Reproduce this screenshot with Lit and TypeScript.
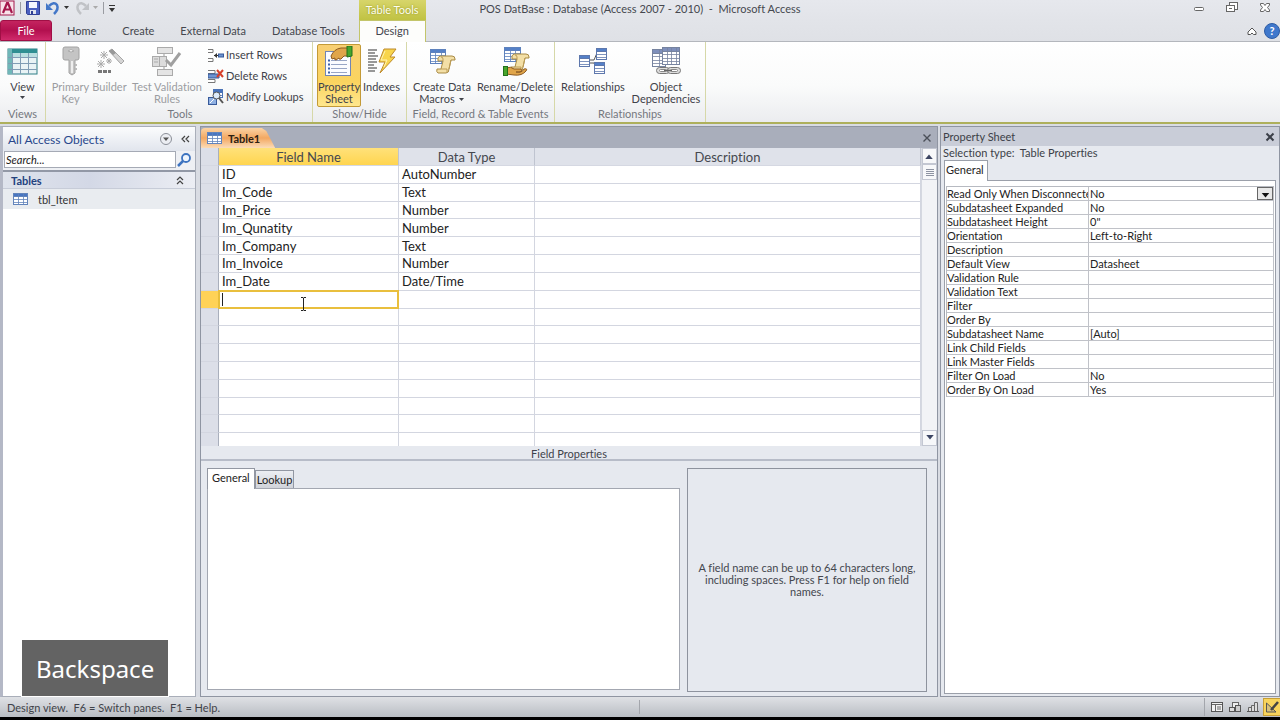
import { LitElement, html, svg, css, nothing } from "lit";
import { customElement } from "lit/decorators.js";
import { classMap } from "lit/directives/class-map.js";

const grid = (x: number, y: number, w: number, h: number, cols: number, rows: number, head: string, line: string) => {
  const parts = [svg`<rect x=${x + 0.5} y=${y + 0.5} width=${w - 1} height=${h - 1} fill="#fff" stroke=${line}/>`,
    svg`<rect x=${x + 0.5} y=${y + 0.5} width=${w - 1} height=${Math.round(h / (rows + 1))} fill=${head} stroke=${line}/>`];
  for (let i = 1; i < cols; i++) parts.push(svg`<path d="M${x + 0.5 + Math.round((w * i) / cols)} ${y}v${h}" stroke=${line} stroke-width=".8"/>`);
  for (let i = 1; i <= rows; i++) parts.push(svg`<path d="M${x} ${y + 0.5 + Math.round((h * i) / (rows + 1))}h${w}" stroke=${line} stroke-width=".8"/>`);
  return parts;
};

const scroll = (x: number, y: number) => svg`<g transform="translate(${x} ${y})">
  <path d="M3 1h12q3 0 3 3v1h-4l-2 9q0 4-3 4H1q-2-1-1-4h4l2-8H1Q0 2 3 1z" fill="#f3dfa6" stroke="#a88a45"/>
  <path d="M6 6V4q0-2-2-2M14 5l-2 9M4 14h6v3" fill="none" stroke="#bd9c55"/></g>`;

const big: Record<string, unknown> = {
  view: svg`<rect x="1" y="3" width="29" height="25" fill="#e9f3f5" stroke="#2f7f86"/>
    <rect x="1" y="3" width="29" height="4" fill="#2f8f92"/><rect x="1" y="3" width="4" height="25" fill="#6fb7b8"/>
    <rect x="5" y="7" width="25" height="4" fill="#b9dfe0"/>
    <path d="M5.500 7v21M13.500 7v21M21.500 7v21M1 11.500h29M1 17.500h29M1 23.500h29" stroke="#7f9cb4" fill="none"/>`,
  key: svg`<path d="M10 1h12q2 0 2 2v9q0 2-2 2h-2v13l-3 2-3-2V14h-4q-2 0-2-2V3q0-2 2-2z" fill="#c4c4c4" stroke="#a2a2a2"/>
    <path d="M13 5q3-3 6 0-3 2-6 0z" fill="#fff" stroke="#aaa"/><path d="M17 15v12" stroke="#eee" stroke-width="2"/><path d="M20 18h2v2h-2M20 22h2v2h-2" fill="#bbb"/>`,
  builder: svg`<path d="m15 5 3-2 12 12-3 3z" fill="#d5d5d5" stroke="#a5a5a5"/><path d="m15 5 3-2 4 4-3 2z" fill="#999"/>
    <path d="M10 5v8M6 9h8M7 6l6 6M13 6l-6 6M15 12v6M12 15h6M13 13l4 4M17 13l-4 4M7 14v8M3 18h8M4 15l6 6M10 15l-6 6" stroke="#aaa"/>
    <path d="M4 25.500h4M9 25.500h4M14 25.500h3" stroke="#777" stroke-width="3"/>`,
  validate: svg`<path d="M13 7v3M13 20v4M24 13l-5 7" stroke="#999"/><rect x="6.500" y="1.500" width="15" height="6" fill="#e4e4e4" stroke="#aaa"/>
    <rect x="1.500" y="10.500" width="14" height="10" fill="#dcdcdc" stroke="#aaa"/><path d="M8.500 11v9M3 13h4M3 16h4" stroke="#aaa"/>
    <rect x="6.500" y="23.500" width="15" height="6" fill="#e4e4e4" stroke="#aaa"/><path d="m15 14 5 5 9-12" fill="none" stroke="#a0a0a0" stroke-width="3"/>`,
  sheet: svg`<rect x="2.500" y="5.500" width="25" height="24" fill="#fbfcff" stroke="#7185b5"/><path d="M8 14.500h16M8 18.500h16M8 22.500h16M8 26.500h16" stroke="#98a6c6"/>
    <path d="M5 14.500h2M5 18.500h2M5 22.500h2M5 26.500h2" stroke="#3d61a8" stroke-width="2"/>
    <path d="M8 10q3-7 10-8h7v8h-4l-3 3q-2 1-2-1l-3 2q-2 0-1-2l-3 1z" fill="#e0a549" stroke="#8c5a22"/><path d="M24 0h5v10l-5 1z" fill="#47a52c" stroke="#22701a"/>`,
  indexes: svg`<path d="M2 4h9M2 7h7M2 10h10M2 13h8M2 16h9M2 19h6M2 22h9M2 25h7" stroke="#777" stroke-width="1.600"/>
    <path d="M18 3h12l-6 8h5L14 27l5-11h-6z" fill="#f8d54c" stroke="#bd8a2c"/><path d="m19 5-4 9h6l-3 7" fill="none" stroke="#fff3b5"/>`,
  create: svg`${grid(4, 3, 16, 15, 3, 4, "#5480c8", "#5e82bd")}${scroll(11, 9)}`,
  rename: svg`${grid(5, 1, 17, 15, 3, 4, "#5480c8", "#5e82bd")}${scroll(12, 7)}
    <path d="M7 22q5-2 8 1h7q2 2-1 3h-4q6 1 8-3 4-1 2 2-4 5-12 4l-8-1z" fill="#e0a549" stroke="#8c5a22"/><rect x="4.500" y="20.500" width="4" height="9" fill="#47a52c" stroke="#22701a"/>`,
  relations: svg`<path d="M12 14h5l3-7M12 17h5l3 5" stroke="#555" fill="none"/>${grid(2, 9, 11, 12, 1, 3, "#5480c8", "#5e78ad")}${grid(19, 2, 11, 12, 1, 3, "#5480c8", "#5e78ad")}${grid(17, 16, 11, 12, 1, 3, "#5480c8", "#5e78ad")}`,
  depend: svg`${grid(2, 3, 14, 18, 2, 4, "#7e8fbb", "#76839f")}${grid(12, 1, 18, 18, 4, 4, "#7e8fbb", "#76839f")}
    <rect x="6.500" y="21.500" width="13" height="6" rx="3" fill="#ddd" stroke="#777"/><rect x="17.500" y="21.500" width="13" height="6" rx="3" fill="#ddd" stroke="#777"/>
    <rect x="9.500" y="23.500" width="7" height="2" rx="1" fill="#fff" stroke="#888"/><rect x="20.500" y="23.500" width="7" height="2" rx="1" fill="#fff" stroke="#888"/><path d="M14 24.500h8" stroke="#666" stroke-width="1.500"/>`,
};

const small: Record<string, unknown> = {
  insert: svg`<path d="M0 2.500h5v3H0M0 11.500h5v3H0" fill="#fff" stroke="#777"/><path d="M6 8.500h4" stroke="#333"/><path d="m9 6-3 2.500L9 11z" fill="#333"/><rect x="10.500" y="7" width="5" height="3" fill="#6d94d0" stroke="#37599a"/>`,
  remove: svg`<path d="M0 2.500h7v3H0M0 11.500h7v3H0" fill="#fff" stroke="#777"/><path d="M0 6h11v4H0z" fill="#6d94d0" stroke="#37599a"/><path d="m9 2 6 7M15 2 9 9" stroke="#d8402a" stroke-width="2"/>`,
  lookup: svg`${grid(5, 0, 10, 9, 2, 2, "#4673c0", "#4a72b5")}<rect x=".5" y="8.500" width="8" height="7" fill="#8fb0e2" stroke="#37599a"/><path d="m2 14 4-4" stroke="#fff"/><circle cx="8.500" cy="6.500" r="3.500" fill="#dcebfb" stroke="#555"/><path d="m11 9 4 5" stroke="#555" stroke-width="2"/>`,
  datasheet: grid(0, 2, 15, 12, 3, 3, "#4876c2", "#6284bb"),
  logo: svg`<rect x="0" y="1" width="14" height="14" fill="#f8e3ea" stroke="#a5184c"/><path d="m3 13 4-10h1l4 10M4.500 9.500h6" fill="none" stroke="#a5184c" stroke-width="2.200"/>`,
  save: svg`<path d="M1.500 1.500h13v13h-12l-1-1z" fill="#4a5fc0" stroke="#303f94"/><rect x="4" y="2" width="8" height="6" fill="#f4f6ff"/><rect x="5" y="10" width="6" height="4" fill="#dfe3ee"/><rect x="6" y="11" width="2" height="3" fill="#303f94"/>`,
  undo: svg`<path d="M4 6q5-5 8-1 2 4-3 9" fill="none" stroke="#4377c8" stroke-width="2.500"/><path d="M1 3v7h7z" fill="#4377c8"/>`,
  redo: svg`<path d="M12 6Q7 1 4 5q-2 4 3 9" fill="none" stroke="#c0c2c6" stroke-width="2.500"/><path d="M15 3v7H8z" fill="#c0c2c6"/>`,
  search: svg`<circle cx="9" cy="6" r="4" fill="#eef5fd" stroke="#3d73c0" stroke-width="1.800"/><path d="m6 9-5 5" stroke="#3d73c0" stroke-width="2.500"/>`,
  up2: svg`<path d="m5 8 3-3 3 3M5 12l3-3 3 3" fill="none" stroke="#444" stroke-width="1.200"/>`,
  left2: svg`<path d="m7 5-3 3 3 3M11 5 8 8l3 3" fill="none" stroke="#444" stroke-width="1.200"/>`,
  round: svg`<circle cx="8" cy="8" r="5.500" fill="#eceef3" stroke="#8b8f98"/><path d="M5 6.500h6L8 10z" fill="#555"/>`,
  close: svg`<path d="m4.500 4.500 7 7M11.500 4.500l-7 7" stroke="#4b4f58" stroke-width="1.400"/>`,
  closeBold: svg`<path d="m4.500 4.500 7 7M11.500 4.500l-7 7" stroke="#3b3f48" stroke-width="2"/>`,
  min: svg`<rect x="3.500" y="7.500" width="9" height="3" rx="1" fill="#fff" stroke="#666"/>`,
  restore: svg`<rect x="5.500" y="2.500" width="8" height="7" fill="#fff" stroke="#666"/><rect x="2.500" y="5.500" width="8" height="6" fill="#fff" stroke="#666"/><path d="M5 8.500h3" stroke="#666"/>`,
  winClose: svg`<path d="M3.500 3.500h3L8 5.500l1.500-2h3v1.500L10.500 7.500l2 2.500v1.500h-3L8 9.500l-1.500 2h-3V10l2-2.500-2-2.500z" fill="#fff" stroke="#666"/>`,
  collapse: svg`<path d="m8 5 4 4v2.500H9.500L8 10l-1.500 1.500H4V9z" fill="#fff" stroke="#555"/>`,
  design: svg`<path d="M2.500 4v9H12z" fill="#d9c27a" stroke="#555"/><path d="M14 3 7 11" stroke="#444" stroke-width="2.500"/>`,
  sheetView: svg`<rect x="2.500" y="3.500" width="11" height="9" fill="#f2f2f2" stroke="#555"/><path d="M3 5.500h10M6.500 6v6M8 8h4M8 10h4" stroke="#666"/>`,
  pivot: svg`<rect x="5.500" y="3.500" width="6" height="6" fill="#eee" stroke="#666"/><rect x="8.500" y="6.500" width="5" height="6" fill="#ccc" stroke="#555"/><rect x="2.500" y="8.500" width="5" height="4" fill="#ddd" stroke="#555"/>`,
  chart: svg`<path d="M3.500 12.500v-4h3v4zM6.500 12.500v-6h3v6zM9.500 12.500v-9h3v9z" fill="#ddd" stroke="#666"/><path d="M2 12.500h12" stroke="#555"/>`,
};

const icon = (name: string) => html`<svg class="icon" viewBox="0 0 16 16" aria-hidden="true">${small[name]}</svg>`;
const bigIcon = (name: string) => html`<svg class="big-icon" viewBox="0 0 32 32" aria-hidden="true">${big[name]}</svg>`;
const triangle = html`<svg class="tri" viewBox="0 0 7 4" aria-hidden="true"><path d="M1 0h5L3.500 3z" fill="currentColor"/></svg>`;

const base = css`
  * { box-sizing: border-box; }
  button, input, select { font: inherit; color: inherit; margin: 0; padding: 0; border: 0; background: none; border-radius: 0; outline: none; }
  .icon { width: 16px; height: 16px; display: block; flex: none; }
  .big-icon { width: 32px; height: 32px; display: block; flex: none; }
  .tri { width: 7px; height: 4px; display: inline-block; vertical-align: middle; }
`;

@customElement("access-ribbon")
export class AccessRibbon extends LitElement {
  static styles = [base, css`
    :host { display: block; }
    .title { display: grid; grid-template-columns: 1fr auto 1fr; align-items: center; height: 20px; padding-bottom: 4px; background: linear-gradient(#e6e8ed, #e2e4e9); color: #45484f; }
    .title > span { white-space: pre; }
    .quick { display: flex; align-items: center; gap: 4px; }
    .quick button { display: flex; align-items: center; gap: 2px; color: #333; }
    .quick .off { color: #aaa; }
    .sep { width: 1px; height: 12px; background: #9a9ca2; }
    .custom { width: 8px; height: 9px; display: block; }
    .window { display: flex; justify-content: flex-end; gap: 17px; padding-right: 7px; }
    .tabs { display: flex; height: 22px; background: linear-gradient(#e2e4e9, #dfe1e6); border-bottom: 1px solid #b4b7bd; color: #44474e; }
    .tab { padding: 0 13px; white-space: nowrap; }
    .file { width: 52px; margin-right: 2px; border-radius: 3px 3px 0 0; color: #fff; border: 1px solid #a00f45; background: linear-gradient(#c4245f, #b3104f 50%, #d02a6b); }
    .context { position: relative; margin: 0 0 -1px 1px; display: flex; }
    .context .tab { width: 67px; padding-bottom: 2px; background: #fdfdfb; border: 1px solid #c3c56a; border-bottom: 0; }
    .context-label { position: absolute; left: 0; right: 0; bottom: 100%; height: 20px; line-height: 19px; text-align: center; color: #fffff0; text-shadow: 0 0 2px #8c8d20; background: linear-gradient(#d7d56a, #c0c243); }
    .tools { margin-left: auto; display: flex; align-items: center; gap: 4px; }
    .help { width: 16px; height: 16px; border-radius: 50%; background: #3f78cc; border: 1px solid #2d5ca4; color: #fff; font-weight: bold; line-height: 14px; text-align: center; }
    .ribbon { display: grid; grid-template-columns: 46px 267px 94px 148px 151px 1fr; height: 82px; background: linear-gradient(#fff, #fafbfb 55%, #ebecef); border-bottom: 2px solid #aeb05c; line-height: 12px; color: #3f4249; }
    .group { display: grid; grid-template-rows: 1fr 14px; padding: 2px 4px 0 4px; border-right: 1px solid #d6d8a8; text-align: center; }
    .group.wide { padding-left: 6px; }
    .group.tight { padding: 2px 1px 0; }
    .buttons { display: flex; gap: 2px; min-width: 0; }
    .group h2 { margin: 0; font: inherit; color: #74777e; white-space: nowrap; }
    .cmd { display: flex; flex-direction: column; align-items: center; gap: 3px; height: 63px; padding-top: 1px; border: 1px solid transparent; border-radius: 2px; white-space: pre; }
    .cmd:disabled { color: #9b9da1; }
    .w-s { width: 37px; }
    .w-m { width: 44px; }
    .w-l { width: 68px; }
    .w-xl { width: 74px; }
    .on { border-color: #c39a37; background: linear-gradient(#f8cf73, #fbd45f 60%, #ffe78d); }
    .list { display: flex; flex-direction: column; padding-left: 2px; }
    .row { display: flex; align-items: center; gap: 2px; height: 21px; white-space: nowrap; }
  `];

  cmd(name: string, text: string, width: string, opts: { off?: boolean; on?: boolean; menu?: boolean } = {}) {
    return html`<button class=${classMap({ cmd: true, [width]: true, on: !!opts.on })} ?disabled=${!!opts.off}>
      ${bigIcon(name)}<span>${text}${opts.menu ? triangle : nothing}</span></button>`;
  }

  render() {
    return html`
      <header class="title">
        <div class="quick">
          ${icon("logo")}<i class="sep"></i>
          <button aria-label="Save">${icon("save")}</button>
          <button aria-label="Undo">${icon("undo")}${triangle}</button>
          <button class="off" aria-label="Redo">${icon("redo")}${triangle}</button>
          <i class="sep"></i><button aria-label="Customize Quick Access Toolbar"><svg class="custom" viewBox="0 0 8 9"><path d="M1 1.500h6" stroke="#333"/><path d="M1 4h6L4 8z" fill="#333"/></svg></button>
        </div>
        <span>POS DatBase : Database (Access 2007 - 2010)  -  Microsoft Access</span>
        <div class="window">
          <button aria-label="Minimize">${icon("min")}</button>
          <button aria-label="Restore">${icon("restore")}</button>
          <button aria-label="Close">${icon("winClose")}</button>
        </div>
      </header>
      <nav class="tabs">
        <button class="tab file">File</button>
        ${["Home", "Create", "External Data", "Database Tools"].map((t) => html`<button class="tab">${t}</button>`)}
        <div class="context"><span class="context-label">Table Tools</span><button class="tab">Design</button></div>
        <div class="tools"><button aria-label="Minimize the Ribbon">${icon("collapse")}</button><button class="help" aria-label="Help">?</button></div>
      </nav>
      <div class="ribbon">
        <section class="group"><div class="buttons"><button class="cmd w-s">${bigIcon("view")}<span>View</span>${triangle}</button></div><h2>Views</h2></section>
        <section class="group wide">
          <div class="buttons">
            ${this.cmd("key", "Primary\nKey", "w-s", { off: true })}
            ${this.cmd("builder", "Builder", "w-s", { off: true })}
            ${this.cmd("validate", "Test Validation\nRules", "w-xl", { off: true })}
            <div class="list">
              <button class="row">${icon("insert")}Insert Rows</button>
              <button class="row">${icon("remove")}Delete Rows</button>
              <button class="row">${icon("lookup")}Modify Lookups</button>
            </div>
          </div><h2>Tools</h2>
        </section>
        <section class="group"><div class="buttons">${this.cmd("sheet", "Property\nSheet", "w-m", { on: true })}${this.cmd("indexes", "Indexes", "w-s")}</div><h2>Show/Hide</h2></section>
        <section class="group tight"><div class="buttons">${this.cmd("create", "Create Data\nMacros ", "w-l", { menu: true })}${this.cmd("rename", "Rename/Delete\nMacro", "w-xl")}</div><h2>Field, Record &amp; Table Events</h2></section>
        <section class="group tight"><div class="buttons">${this.cmd("relations", "Relationships", "w-xl")}${this.cmd("depend", "Object\nDependencies", "w-l")}</div><h2>Relationships</h2></section>
      </div>`;
  }
}

@customElement("navigation-pane")
export class NavigationPane extends LitElement {
  static styles = [base, css`
    :host { display: flex; flex-direction: column; background: #fff; border: 1px solid #a9aeb9; border-left: 3px solid #b4b8c6; }
    header { display: flex; align-items: center; gap: 4px; height: 24px; padding: 0 1px 0 5px; background: linear-gradient(#fbfcfd, #e1e5ed); color: #29488c; }
    h1 { flex: 1; margin: 0; font-size: 12px; font-weight: normal; }
    .find { display: flex; align-items: center; gap: 1px; height: 21px; padding: 0 2px 2px 1px; background: #eef0f4; border-bottom: 2px solid #9298a6; }
    input { flex: 1; min-width: 0; height: 17px; padding: 0 1px; border: 1px solid #a5aab5; background: #fff; font-style: italic; color: #222; }
    input::placeholder { color: #222; opacity: 1; }
    .section { display: flex; align-items: center; justify-content: space-between; width: 100%; height: 17px; padding: 0 7px 0 8px; font-weight: bold; color: #23427f; background: linear-gradient(90deg, #dfe3ec, #d3d8e6 45%, #eceef4); border-bottom: 1px solid #c7ccd8; }
    .item { display: flex; align-items: center; gap: 9px; width: 100%; height: 20px; padding-left: 10px; background: #e9ecf0; color: #333; }
  `];
  render() {
    return html`
      <header><h1>All Access Objects</h1><button aria-label="Choose category">${icon("round")}</button><button aria-label="Collapse pane">${icon("left2")}</button></header>
      <div class="find"><input type="text" aria-label="Search" placeholder="Search..." /><button aria-label="Go">${icon("search")}</button></div>
      <button class="section">Tables${icon("up2")}</button>
      <button class="item">${icon("datasheet")}tbl_Item</button>`;
  }
}

const fields = [["ID", "AutoNumber"], ["Im_Code", "Text"], ["Im_Price", "Number"], ["Im_Qunatity", "Number"], ["Im_Company", "Text"], ["Im_Invoice", "Number"], ["Im_Date", "Date/Time"]];
const rowCount = 16;
const currentRow = 7;

@customElement("table-designer")
export class TableDesigner extends LitElement {
  static styles = [base, css`
    :host { display: flex; flex-direction: column; min-width: 0; background: #e6e9ef; border: 1px solid #8f95a2; }
    .strip { display: flex; align-items: flex-end; justify-content: space-between; height: 21px; background: #a9aebb; }
    .doc { display: flex; align-items: center; gap: 5px; height: 20px; padding: 0 15px 0 6px; font-weight: bold; color: #2c2013; border-radius: 4px 0 0 0; clip-path: polygon(0 0, 82% 0, 88% 15%, 100% 100%, 0 100%); background: linear-gradient(#fbd3a4, #f3a862 50%, #fbdcb8); }
    .close { padding: 2px; }
    .sheet { display: flex; height: 298px; background: #fff; }
    .rows { flex: 1; min-width: 0; overflow: hidden; }
    table { width: 100%; height: 303px; table-layout: fixed; border-spacing: 0; font-size: 13px; line-height: 16px; color: #222; }
    th { height: 18px; padding: 0; font-weight: normal; color: #45484f; background: #dfe2ea; border-right: 1px solid #bfc4d0; border-bottom: 1px solid #d5d8e2; }
    td { height: 17px; padding: 0 3px; border-right: 1px solid #d3d6e0; border-bottom: 1px solid #d3d6e0; }
    .mark { width: 18px; background: #dcdfe8; border-right-color: #a9afbc; }
    .name { width: 180px; }
    .type { width: 136px; }
    th.name { background: linear-gradient(#ffe17a, #ffd54f); }
    .here .mark { background: #ffd257; }
    .here .name { position: relative; padding: 0; }
    .cell { position: absolute; inset: -1px; border: 2px solid #e9bf3d; background: #fff; }
    .cell input { display: block; width: 100%; height: 100%; padding: 0 3px; }
    .caret { position: absolute; left: 2px; top: 1px; bottom: 1px; width: 1px; background: #222; }
    .pointer { position: absolute; left: 79px; top: 4px; width: 9px; height: 16px; z-index: 1; }
    .bar { width: 16px; display: flex; flex-direction: column; background: #f2f3f6; border-left: 1px solid #d5d8e0; color: #3c4563; }
    .bar button { height: 16px; display: grid; place-items: center; border: 1px solid #c3c7d2; background: #f7f8fa; }
    .bar .tri { width: 12px; height: 6px; }
    .bar .flip { transform: rotate(180deg); }
    .bar .end { margin-top: auto; }
    .thumb { width: 10px; height: 9px; }
    .caption { height: 15px; line-height: 15px; text-align: center; border-bottom: 2px solid #b7bcc8; color: #3f424a; }
    .lower { flex: 1; display: grid; grid-template-columns: 473px 1fr; gap: 7px; padding: 7px 10px 4px 6px; }
    .props { display: flex; flex-direction: column; margin-bottom: 2px; }
    .tabs { display: flex; align-items: flex-end; height: 20px; }
    .tabs button { height: 18px; padding: 0 1px; color: #222; border: 1px solid #9297a2; border-bottom: 0; background: linear-gradient(#eceef2, #d0d3da); }
    .tabs .sel { height: 21px; margin-bottom: -1px; padding: 0 4px 3px; background: #fff; z-index: 1; }
    .page { flex: 1; background: #fff; border: 1px solid #a3a7b1; }
    .hint { display: grid; place-items: center; margin: 0; padding: 0 6px; text-align: center; line-height: 12px; border: 1px solid #8e939e; color: #44474e; }
  `];

  row(i: number) {
    const [name = "", type = ""] = fields[i] ?? [];
    const here = i === currentRow;
    return html`<tr class=${here ? "here" : ""}>
      <td class="mark"></td>
      <td class="name">${here
        ? html`<div class="cell"><input type="text" aria-label="Field Name" /><i class="caret"></i>
            <svg class="pointer" viewBox="0 0 9 16" aria-hidden="true"><path d="M2 1.500h2l.5 1 .5-1h2M4.500 2v12M2 14.500h2l.5-1 .5 1h2" fill="none" stroke="#222"/></svg></div>`
        : name}</td>
      <td class="type">${type}</td><td></td></tr>`;
  }

  render() {
    return html`
      <div class="strip"><div class="doc">${icon("datasheet")}Table1</div><button class="close" aria-label="Close Table1">${icon("close")}</button></div>
      <div class="sheet">
        <div class="rows"><table>
          <thead><tr><th class="mark"></th><th class="name">Field Name</th><th class="type">Data Type</th><th>Description</th></tr></thead>
          <tbody>${Array.from({ length: rowCount }, (_, i) => this.row(i))}</tbody>
        </table></div>
        <div class="bar">
          <button class="flip" aria-label="Scroll up">${triangle}</button>
          <button aria-label="Scroll position"><svg class="thumb" viewBox="0 0 10 9"><path d="M1 1.500h8M1 3.500h8M1 5.500h8M1 7.500h8" stroke="#8d93a2"/></svg></button>
          <button class="end" aria-label="Scroll down">${triangle}</button>
        </div>
      </div>
      <div class="caption">Field Properties</div>
      <div class="lower">
        <div class="props"><div class="tabs"><button class="sel">General</button><button>Lookup</button></div><div class="page"></div></div>
        <p class="hint">A field name can be up to 64 characters long, including spaces. Press F1 for help on field names.</p>
      </div>`;
  }
}

const properties = [["Read Only When Disconnected", "No"], ["Subdatasheet Expanded", "No"], ["Subdatasheet Height", "0\""], ["Orientation", "Left-to-Right"], ["Description", ""], ["Default View", "Datasheet"], ["Validation Rule", ""], ["Validation Text", ""], ["Filter", ""], ["Order By", ""], ["Subdatasheet Name", "[Auto]"], ["Link Child Fields", ""], ["Link Master Fields", ""], ["Filter On Load", "No"], ["Order By On Load", "Yes"]];

@customElement("property-sheet")
export class PropertySheet extends LitElement {
  static styles = [base, css`
    :host { display: flex; flex-direction: column; background: #e6e9ef; border: 1px solid #8f95a2; color: #3c3f47; }
    header { display: flex; align-items: center; justify-content: space-between; height: 19px; padding: 0 1px 0 2px; background: #c9cdd8; }
    h1 { margin: 0; font: inherit; }
    .kind { margin: 0; padding: 0 2px; line-height: 14px; white-space: pre; }
    .tab { align-self: flex-start; height: 21px; margin: 0 0 -1px 3px; padding: 0 3px 3px 1px; background: #fff; border: 1px solid #9ba0aa; border-bottom: 0; z-index: 1; color: #222; }
    .page { flex: 1; margin: 0 3px 2px; padding: 5px 1px 0; background: #fff; border: 1px solid #9ba0aa; }
    table { width: 100%; table-layout: fixed; border-spacing: 0; line-height: 13px; color: #222; border: 1px solid #b7bac1; border-bottom: 0; border-right: 0; }
    th, td { height: 14px; padding: 0 0 0 1px; text-align: left; font-weight: normal; white-space: nowrap; overflow: hidden; border: 0 solid #c0c2c8; border-width: 0 1px 1px 0; }
    th { width: 142px; padding: 0; }
    .pick { display: flex; position: relative; height: 13px; }
    select { appearance: none; flex: 1; line-height: 13px; }
    .drop { position: absolute; right: 0; top: 0; width: 16px; height: 13px; display: grid; place-items: end center; pointer-events: none; border: 1px solid #666; background: #e8e8e8; color: #111; }
    .drop .tri { width: 11px; height: 6px; }
  `];
  render() {
    return html`
      <header><h1>Property Sheet</h1><button aria-label="Close Property Sheet">${icon("closeBold")}</button></header>
      <p class="kind">Selection type:  Table Properties</p>
      <button class="tab">General</button>
      <div class="page"><table>
        ${properties.map(([k, v], i) => html`<tr><th scope="row">${k}</th><td>${i === 0
          ? html`<div class="pick"><select aria-label=${k}><option>No</option><option>Yes</option></select><span class="drop">${triangle}</span></div>`
          : v}</td></tr>`)}
      </table></div>`;
  }
}

@customElement("app-root")
export class AppRoot extends LitElement {
  static styles = [base, css`
    :host { position: relative; display: flex; flex-direction: column; height: 100vh; overflow: hidden; font-family: Lato, "Open Sans", sans-serif; font-size: 11px; font-variant-ligatures: none; background: #d9dce3; }
    main { flex: 1; min-height: 0; display: grid; grid-template-columns: 196px 1fr 340px; column-gap: 2px; padding-top: 2px; }
    table-designer { margin-left: 2px; }
    footer { display: flex; align-items: center; height: 20px; padding-left: 7px; color: #3f4249; background: linear-gradient(#dfe1e5, #b9bdc3); }
    .status { flex: 1; display: flex; align-items: center; height: 16px; white-space: pre; }
    .status span { width: calc(50vw - 8px); }
    .status i { width: 1px; height: 14px; background: #a3a6ac; }
    .views { display: flex; align-items: center; gap: 1px; padding-left: 4px; border-left: 1px solid #a3a6ac; }
    .views button { width: 17px; height: 16px; }
    .views .on { height: 18px; background: #f8d45c; border: 1px solid #c79f35; border-right: 0; }
    .edge { height: 3px; background: #000; }
    .key { position: absolute; left: 21px; bottom: 23px; padding: 12px 14px 10px; border: 1px solid #fff; background: #636363; color: #fff; font: 24px/34px "Noto Sans", sans-serif; }
  `];
  render() {
    return html`
      <access-ribbon></access-ribbon>
      <main><navigation-pane></navigation-pane><table-designer></table-designer><property-sheet></property-sheet></main>
      <footer>
        <div class="status"><span>Design view.  F6 = Switch panes.  F1 = Help.</span><i></i></div>
        <div class="views">
          <button aria-label="Datasheet View">${icon("sheetView")}</button><button aria-label="PivotTable View">${icon("pivot")}</button>
          <button aria-label="PivotChart View">${icon("chart")}</button><button class="on" aria-label="Design View">${icon("design")}</button>
        </div>
      </footer>
      <div class="edge"></div>
      <div class="key">Backspace</div>`;
  }
}
